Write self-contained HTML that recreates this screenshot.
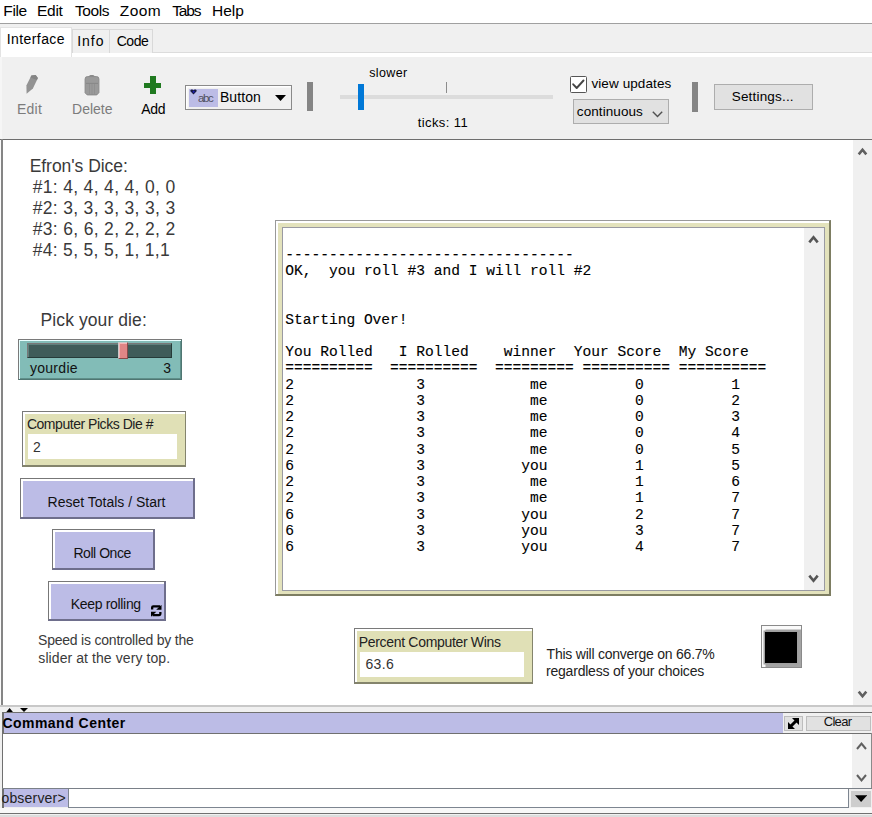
<!DOCTYPE html>
<html><head><meta charset="utf-8"><style>
html,body{margin:0;padding:0;}
body{width:872px;height:817px;position:relative;overflow:hidden;background:#fff;font-family:"Liberation Sans",sans-serif;}
body>div,body>svg{position:absolute;box-sizing:border-box;}
</style></head><body>
<div style="left:0px;top:0px;width:872px;height:23px;background:#fff;"></div>
<div style="left:0px;top:23px;width:872px;height:1px;background:#a0a0a0;"></div>
<div style="left:3.25px;top:2.98px;font:normal 15.5px/15.5px 'Liberation Sans', sans-serif;color:#000;letter-spacing:-0.333px;white-space:pre;">File</div>
<div style="left:37.05px;top:2.98px;font:normal 15.5px/15.5px 'Liberation Sans', sans-serif;color:#000;letter-spacing:-0.300px;white-space:pre;">Edit</div>
<div style="left:74.95px;top:2.98px;font:normal 15.5px/15.5px 'Liberation Sans', sans-serif;color:#000;letter-spacing:-0.425px;white-space:pre;">Tools</div>
<div style="left:119.85px;top:2.98px;font:normal 15.5px/15.5px 'Liberation Sans', sans-serif;color:#000;letter-spacing:0.367px;white-space:pre;">Zoom</div>
<div style="left:172.25px;top:2.98px;font:normal 15.5px/15.5px 'Liberation Sans', sans-serif;color:#000;letter-spacing:-1.167px;white-space:pre;">Tabs</div>
<div style="left:211.95px;top:2.98px;font:normal 15.5px/15.5px 'Liberation Sans', sans-serif;color:#000;letter-spacing:-0.000px;white-space:pre;">Help</div>
<div style="left:0px;top:24px;width:872px;height:33px;background:#f0f0f0;"></div>
<div style="left:0px;top:52px;width:872px;height:1px;background:#dcdcdc;"></div>
<div style="left:0px;top:53px;width:872px;height:4px;background:#fff;"></div>
<div style="left:0px;top:27px;width:72px;height:30px;background:#fff;border:1px solid #e3e3e3;border-bottom:none;"></div>
<div style="left:72px;top:29px;width:38px;height:24px;background:#f0f0f0;border:1px solid #d9d9d9;border-bottom:none;"></div>
<div style="left:109px;top:29px;width:44px;height:24px;background:#f0f0f0;border:1px solid #d9d9d9;border-bottom:none;"></div>
<div style="left:6.70px;top:32.05px;font:normal 14px/14px 'Liberation Sans', sans-serif;color:#000;letter-spacing:0.425px;white-space:pre;">Interface</div>
<div style="left:77.30px;top:34.25px;font:normal 14px/14px 'Liberation Sans', sans-serif;color:#000;letter-spacing:0.933px;white-space:pre;">Info</div>
<div style="left:116.80px;top:34.25px;font:normal 14px/14px 'Liberation Sans', sans-serif;color:#000;letter-spacing:-0.533px;white-space:pre;">Code</div>
<div style="left:0px;top:57px;width:872px;height:83px;background:#f0f0f0;"></div>
<div style="left:0px;top:57px;width:2px;height:82px;background:#f6f6f6;"></div>
<div style="left:0px;top:139px;width:872px;height:1px;background:#6e6e6e;"></div>
<svg style="left:20px;top:70px" width="25" height="28" viewBox="20 70 25 28"><path d="M26.6 93.8 L26.4 85.6 L31.4 75.4 L35.6 75.1 L37.9 77.9 L32.9 88.6 Z" fill="#939393"/><path d="M31.4 75.4 L35.6 75.1 L37.9 77.9 L36.9 79.9 L30.4 77.4Z" fill="#858585"/></svg>
<div style="left:17.00px;top:101.95px;font:normal 14px/14px 'Liberation Sans', sans-serif;color:#7c7c7c;letter-spacing:0.233px;white-space:pre;">Edit</div>
<svg style="left:80px;top:70px" width="25" height="28" viewBox="0 0 25 28"><rect x="9" y="5" width="5.5" height="3.5" rx="1.5" fill="#8a8a8a"/><path d="M5.1 9 Q5.1 6.6 7.5 6.6 L16.5 6.6 Q18.9 6.6 18.9 9 L18.9 22.6 L16.8 24.9 L7.2 24.9 L5.1 22.8 Z" fill="#9a9a9a"/><path d="M5.1 9 Q5.1 6.6 7.5 6.6 L16.5 6.6 Q18.9 6.6 18.9 9 L18.9 22.6 L16.8 24.9 L7.2 24.9 L5.1 22.8 Z" fill="none" stroke="#8a8a8a" stroke-width="1"/><path d="M6 13.4 H18" stroke="#858585" stroke-width="0.9"/><path d="M9.5 14 V24 M12 14 V24.5 M14.5 14 V24" stroke="#8c8c8c" stroke-width="0.7"/></svg>
<div style="left:72.10px;top:101.75px;font:normal 14px/14px 'Liberation Sans', sans-serif;color:#7c7c7c;letter-spacing:-0.020px;white-space:pre;">Delete</div>
<div style="left:149.8px;top:76.4px;width:5.8px;height:17.6px;background:#207a20;"></div>
<div style="left:143.8px;top:82.6px;width:17.7px;height:5.7px;background:#207a20;"></div>
<div style="left:141.30px;top:101.75px;font:normal 14px/14px 'Liberation Sans', sans-serif;color:#000;letter-spacing:-0.300px;white-space:pre;">Add</div>
<div style="left:185px;top:85px;width:107px;height:25px;background:#f0f0f0;border:1.5px solid #8a8a8a;box-shadow:inset 1.5px 1.5px 0 #fff;"></div>
<div style="left:189px;top:89px;width:29px;height:18px;background:#bcbce6;"></div>
<div style="left:198.05px;top:92.66px;font:normal 11.5px/11.5px 'Liberation Sans', sans-serif;color:#505060;letter-spacing:-1.450px;white-space:pre;">abc</div>
<svg style="left:189.8px;top:88.8px" width="7" height="6" viewBox="0 0 7 6"><path d="M3.5 5.6 L0.6 2.6 Q-0.2 1 1.4 0.5 Q2.8 0.1 3.5 1.3 Q4.2 0.1 5.6 0.5 Q7.2 1 6.4 2.6 Z" fill="#1a1a40"/><circle cx="3.6" cy="2.8" r="1" fill="#2020c0"/></svg>
<div style="left:219.90px;top:89.95px;font:normal 14px/14px 'Liberation Sans', sans-serif;color:#000;letter-spacing:0.100px;white-space:pre;">Button</div>
<svg style="left:275px;top:95px" width="11" height="6" viewBox="0 0 11 6"><path d="M0 0H11L5.5 6Z" fill="#000"/></svg>
<div style="left:307px;top:82px;width:6px;height:29px;background:#858585;"></div>
<div style="left:691.5px;top:81.5px;width:6.5px;height:30px;background:#858585;"></div>
<div style="left:369.15px;top:66.92px;font:normal 12.5px/12.5px 'Liberation Sans', sans-serif;color:#000;letter-spacing:0.380px;white-space:pre;">slower</div>
<div style="left:340px;top:95.3px;width:212.5px;height:3.4px;background:#dcdcdc;"></div>
<div style="left:446px;top:82.4px;width:1.4px;height:10.3px;background:#8c8c8c;"></div>
<div style="left:358px;top:84.1px;width:6px;height:26.2px;background:#0078d7;"></div>
<div style="left:417.80px;top:116.49px;font:normal 13px/13px 'Liberation Sans', sans-serif;color:#000;letter-spacing:0.388px;white-space:pre;">ticks: 11</div>
<div style="left:570.2px;top:76.3px;width:16.6px;height:16.5px;background:#fff;border:1.8px solid #555;border-radius:1.5px;"></div>
<svg style="left:572px;top:78px" width="13" height="13" viewBox="0 0 13 13"><path d="M1.2 6.3 L4.7 10 L11.5 2.5" fill="none" stroke="#444" stroke-width="1.9" stroke-linecap="round" stroke-linejoin="round"/></svg>
<div style="left:591.45px;top:76.77px;font:normal 13.5px/13.5px 'Liberation Sans', sans-serif;color:#000;letter-spacing:0.091px;white-space:pre;">view updates</div>
<div style="left:573px;top:99px;width:96px;height:25px;background:#e1e1e1;border:1px solid #adadad;"></div>
<div style="left:576.85px;top:104.87px;font:normal 13.5px/13.5px 'Liberation Sans', sans-serif;color:#000;letter-spacing:0.078px;white-space:pre;">continuous</div>
<svg style="left:651.5px;top:110.5px" width="11" height="7" viewBox="0 0 11 7"><path d="M0.8 0.8 L5.5 5.6 L10.2 0.8" fill="none" stroke="#505050" stroke-width="1.4"/></svg>
<div style="left:714px;top:84px;width:99px;height:26px;background:#e1e1e1;border:1px solid #adadad;"></div>
<div style="left:731.75px;top:89.87px;font:normal 13.5px/13.5px 'Liberation Sans', sans-serif;color:#000;letter-spacing:0.180px;white-space:pre;">Settings...</div>
<div style="left:0px;top:140px;width:853px;height:566px;background:#fff;"></div>
<div style="left:0px;top:140px;width:1px;height:566px;background:#fafafa;"></div>
<div style="left:1px;top:139px;width:2px;height:567px;background:#858585;"></div>
<div style="left:0px;top:705px;width:872px;height:2px;background:#c8c8c8;"></div>
<div style="left:853px;top:140px;width:19px;height:565px;background:#f0f0f0;"></div>
<svg style="left:857px;top:146px" width="11" height="10" viewBox="0 0 11 10"><path d="M1.7 8.4 L5.5 3.7 L9.3 8.4" fill="none" stroke="#606060" stroke-width="2.6"/></svg>
<svg style="left:857px;top:690px" width="11" height="10" viewBox="0 0 11 10"><path d="M1.7 1.6 L5.5 6.3 L9.3 1.6" fill="none" stroke="#606060" stroke-width="2.6"/></svg>
<div style="left:29.65px;top:157.88px;font:normal 17.5px/17.5px 'Liberation Sans', sans-serif;color:#3a3a3a;letter-spacing:-0.033px;white-space:pre;">Efron&#x27;s Dice:</div>
<div style="left:32.65px;top:178.98px;font:normal 17.5px/17.5px 'Liberation Sans', sans-serif;color:#3a3a3a;letter-spacing:0.332px;white-space:pre;">#1: 4, 4, 4, 4, 0, 0</div>
<div style="left:32.65px;top:200.13px;font:normal 17.5px/17.5px 'Liberation Sans', sans-serif;color:#3a3a3a;letter-spacing:0.332px;white-space:pre;">#2: 3, 3, 3, 3, 3, 3</div>
<div style="left:32.65px;top:221.28px;font:normal 17.5px/17.5px 'Liberation Sans', sans-serif;color:#3a3a3a;letter-spacing:0.337px;white-space:pre;">#3: 6, 6, 2, 2, 2, 2</div>
<div style="left:32.65px;top:242.43px;font:normal 17.5px/17.5px 'Liberation Sans', sans-serif;color:#3a3a3a;letter-spacing:0.322px;white-space:pre;">#4: 5, 5, 5, 1, 1,1</div>
<div style="left:40.55px;top:312.48px;font:normal 17.5px/17.5px 'Liberation Sans', sans-serif;color:#3a3a3a;letter-spacing:0.092px;white-space:pre;">Pick your die:</div>
<div style="left:18px;top:339px;width:164px;height:41px;background:#82bcb7;border:1px solid #7a7a7a;border-right-color:#4f7672;border-bottom-color:#4f7672;box-shadow:inset 1px 1px 0 #e8ffff, inset -1px -1px 0 #5f8f8a;"></div>
<div style="left:27px;top:343px;width:145px;height:15px;background:#3f5c59;border:1px solid #777;border-right-color:#263b39;border-bottom-color:#263b39;box-shadow:inset 1px 1px 0 #5f807c;"></div>
<div style="left:118px;top:342px;width:10px;height:17px;background:#e08686;border:1px solid #c9c9c9;border-right-color:#8a4a4a;border-bottom-color:#8a4a4a;box-shadow:inset 1px 1px 0 #f5b5b5;"></div>
<div style="left:29.90px;top:360.85px;font:normal 14px/14px 'Liberation Sans', sans-serif;color:#111;letter-spacing:0.300px;white-space:pre;">yourdie</div>
<div style="left:163.30px;top:360.65px;font:normal 14px/14px 'Liberation Sans', sans-serif;color:#111;letter-spacing:0.000px;white-space:pre;">3</div>
<div style="left:21.5px;top:410.5px;width:164px;height:56px;background:#e0e0b6;border:1px solid #7a7a7a;border-right-color:#84846c;border-bottom:2px solid #84846c;box-shadow:inset 2px 2px 0 #fff;"></div>
<div style="left:27.6px;top:434.2px;width:149.3px;height:25px;background:#fff;"></div>
<div style="left:26.90px;top:417.15px;font:normal 14px/14px 'Liberation Sans', sans-serif;color:#222;letter-spacing:-0.463px;white-space:pre;">Computer Picks Die #</div>
<div style="left:33.10px;top:439.95px;font:normal 14px/14px 'Liberation Sans', sans-serif;color:#333;letter-spacing:0.000px;white-space:pre;">2</div>
<div style="left:20.4px;top:478.3px;width:174.6px;height:40.6px;background:#bcbce6;border:1px solid #777;border-bottom:2px solid #6e6e8c;border-right:2px solid #6e6e8c;box-shadow:inset 2px 2px 0 #fff;"></div>
<div style="left:47.60px;top:494.95px;font:normal 14px/14px 'Liberation Sans', sans-serif;color:#111;letter-spacing:-0.005px;white-space:pre;">Reset Totals / Start</div>
<div style="left:51.6px;top:529.2px;width:103.6px;height:41px;background:#bcbce6;border:1px solid #777;border-bottom:2px solid #6e6e8c;border-right:2px solid #6e6e8c;box-shadow:inset 2px 2px 0 #fff;"></div>
<div style="left:73.40px;top:546.25px;font:normal 14px/14px 'Liberation Sans', sans-serif;color:#111;letter-spacing:-0.450px;white-space:pre;">Roll Once</div>
<div style="left:47.9px;top:580.6px;width:118.2px;height:40.8px;background:#bcbce6;border:1px solid #777;border-bottom:2px solid #6e6e8c;border-right:2px solid #6e6e8c;box-shadow:inset 2px 2px 0 #fff;"></div>
<div style="left:70.80px;top:597.45px;font:normal 14px/14px 'Liberation Sans', sans-serif;color:#111;letter-spacing:-0.327px;white-space:pre;">Keep rolling</div>
<svg style="left:151.3px;top:605.2px" width="10.5" height="11.5" viewBox="0 0 10.5 11.5"><g><path d="M0 4.6 V2.4 Q0 0.3 2.2 0.3 H9 V2.6 H2.3 V4.6Z" fill="#000"/><path d="M5.2 4.7 L10.5 -0.2 V4.7Z" fill="#000"/></g><g transform="rotate(180 5.25 5.75)"><path d="M0 4.6 V2.4 Q0 0.3 2.2 0.3 H9 V2.6 H2.3 V4.6Z" fill="#000"/><path d="M5.2 4.7 L10.5 -0.2 V4.7Z" fill="#000"/></g></svg>
<div style="left:38.00px;top:633.35px;font:normal 14px/14px 'Liberation Sans', sans-serif;color:#3a3a3a;letter-spacing:-0.212px;white-space:pre;">Speed is controlled by the</div>
<div style="left:38.30px;top:650.75px;font:normal 14px/14px 'Liberation Sans', sans-serif;color:#3a3a3a;letter-spacing:0.082px;white-space:pre;">slider at the very top.</div>
<div style="left:275px;top:220px;width:556px;height:376px;background:#e3e2bc;border-top:1px solid #999;border-left:1px solid #999;border-right:2px solid #7d7d62;border-bottom:2px solid #7d7d62;box-shadow:inset 2px 2px 0 #fff;"></div>
<div style="left:281.5px;top:226.5px;width:543.5px;height:364px;background:#fff;border:1px solid #9a9aa2;border-right:none;"></div>
<div style="left:804px;top:227.5px;width:20px;height:362px;background:#f0f0f0;"></div>
<div style="left:824px;top:226.5px;width:1px;height:364px;background:#9a9aa2;"></div>
<svg style="left:808px;top:234px" width="11" height="10" viewBox="0 0 11 10"><path d="M1.3 8.3 L5.5 3.2 L9.7 8.3" fill="none" stroke="#555" stroke-width="2.6"/></svg>
<svg style="left:808px;top:574px" width="11" height="10" viewBox="0 0 11 10"><path d="M1.3 1.7 L5.5 6.8 L9.7 1.7" fill="none" stroke="#555" stroke-width="2.6"/></svg>
<div style="left:285.15px;top:230.29px;font:normal 14.595px/16.25px 'Liberation Mono', monospace;color:#000;white-space:pre;-webkit-text-stroke:0.12px #000;">
---------------------------------
OK,  you roll #3 and I will roll #2


Starting Over!

You Rolled   I Rolled    winner  Your Score  My Score
==========  ==========  ========= ========== ==========
2              3            me          0          1
2              3            me          0          2
2              3            me          0          3
2              3            me          0          4
2              3            me          0          5
6              3           you          1          5
2              3            me          1          6
2              3            me          1          7
6              3           you          2          7
6              3           you          3          7
6              3           you          4          7</div>
<div style="left:354.2px;top:628px;width:178.4px;height:56px;background:#e0e0b6;border:1px solid #7a7a7a;border-right-color:#84846c;border-bottom:2px solid #84846c;box-shadow:inset 2px 2px 0 #fff;"></div>
<div style="left:359.9px;top:651.7px;width:164.5px;height:25.2px;background:#fff;"></div>
<div style="left:358.80px;top:634.55px;font:normal 14px/14px 'Liberation Sans', sans-serif;color:#222;letter-spacing:-0.320px;white-space:pre;">Percent Computer Wins</div>
<div style="left:365.40px;top:656.75px;font:normal 14px/14px 'Liberation Sans', sans-serif;color:#333;letter-spacing:0.367px;white-space:pre;">63.6</div>
<div style="left:546.60px;top:646.95px;font:normal 14px/14px 'Liberation Sans', sans-serif;color:#222;letter-spacing:-0.235px;white-space:pre;">This will converge on 66.7%</div>
<div style="left:546.00px;top:664.05px;font:normal 14px/14px 'Liberation Sans', sans-serif;color:#222;letter-spacing:-0.208px;white-space:pre;">regardless of your choices</div>
<div style="left:760.5px;top:625.2px;width:41.3px;height:42.7px;background:#a4a4a4;border:1px solid #8a8a8a;box-shadow:inset 3.5px 3.5px 0 #fafafa;"></div>
<div style="left:765.4px;top:631.5px;width:31.5px;height:31.3px;background:#000;box-shadow:0 0 0 1.5px #a0a0a0;"></div>
<div style="left:0px;top:707px;width:872px;height:6px;background:#f0f0f0;"></div>
<svg style="left:6px;top:708px" width="24" height="4" viewBox="0 0 24 4"><path d="M0.3 4 L3.6 0 L6.9 4Z M14 0 H22 L18 4Z" fill="#000"/></svg>
<div style="left:0px;top:712px;width:872px;height:105px;background:#f0f0f0;"></div>
<div style="left:2px;top:712px;width:870px;height:1px;background:#707070;"></div>
<div style="left:4px;top:713px;width:779px;height:20px;background:#bcbce6;"></div>
<div style="left:2px;top:712px;width:2px;height:96px;background:#707070;"></div>
<div style="left:2.40px;top:715.95px;font:bold 14px/14px 'Liberation Sans', sans-serif;color:#000;letter-spacing:0.477px;white-space:pre;">Command Center</div>
<div style="left:784.4px;top:715.8px;width:18.3px;height:15.7px;background:#e1e1e1;border:1px solid #bdbdbd;"></div>
<svg style="left:788px;top:718px" width="11" height="11" viewBox="0 0 11 11"><path d="M11 0 L4 0 L11 7Z M0 11 L0 4 L7 11Z" fill="#000"/><path d="M2.2 8.8 L8.8 2.2" stroke="#000" stroke-width="3"/></svg>
<div style="left:805.8px;top:715.8px;width:65px;height:15.7px;background:#e1e1e1;border:1px solid #bdbdbd;"></div>
<div style="left:823.80px;top:714.99px;font:normal 13px/13px 'Liberation Sans', sans-serif;color:#111;letter-spacing:-0.725px;white-space:pre;">Clear</div>
<div style="left:2px;top:733px;width:870px;height:1px;background:#707070;"></div>
<div style="left:3px;top:734px;width:869px;height:54px;background:#fff;"></div>
<div style="left:852px;top:734px;width:19px;height:54px;background:#f0f0f0;"></div>
<div style="left:871px;top:733px;width:1px;height:56px;background:#8a8a8a;"></div>
<svg style="left:856px;top:741px" width="11" height="10" viewBox="0 0 11 10"><path d="M1 8 L5.5 2.5 L10 8" fill="none" stroke="#606060" stroke-width="2"/></svg>
<svg style="left:856px;top:773px" width="11" height="10" viewBox="0 0 11 10"><path d="M1 2 L5.5 7.5 L10 2" fill="none" stroke="#606060" stroke-width="2"/></svg>
<div style="left:2px;top:788px;width:870px;height:1px;background:#7a8088;"></div>
<div style="left:4px;top:789px;width:63.5px;height:18px;background:#bcbce6;"></div>
<div style="left:1.40px;top:790.55px;font:normal 14px/14px 'Liberation Sans', sans-serif;color:#222;letter-spacing:0.200px;white-space:pre;">observer&gt;</div>
<div style="left:67.5px;top:789px;width:781.5px;height:19px;background:#fff;border:1px solid #7d8590;border-top:none;"></div>
<div style="left:851px;top:791px;width:19.7px;height:15.5px;background:#cdcdcd;"></div>
<svg style="left:855px;top:795px" width="12.2" height="7" viewBox="0 0 12.2 7"><path d="M0 0.2 H12.2 L6.1 6.9Z" fill="#000"/></svg>
<div style="left:0px;top:808px;width:872px;height:5.5px;background:#f8f8f8;"></div>
<div style="left:0px;top:813.3px;width:872px;height:1.2px;background:#707070;"></div>
<div style="left:0px;top:814.5px;width:872px;height:2.5px;background:#dcdcdc;"></div>
</body></html>
